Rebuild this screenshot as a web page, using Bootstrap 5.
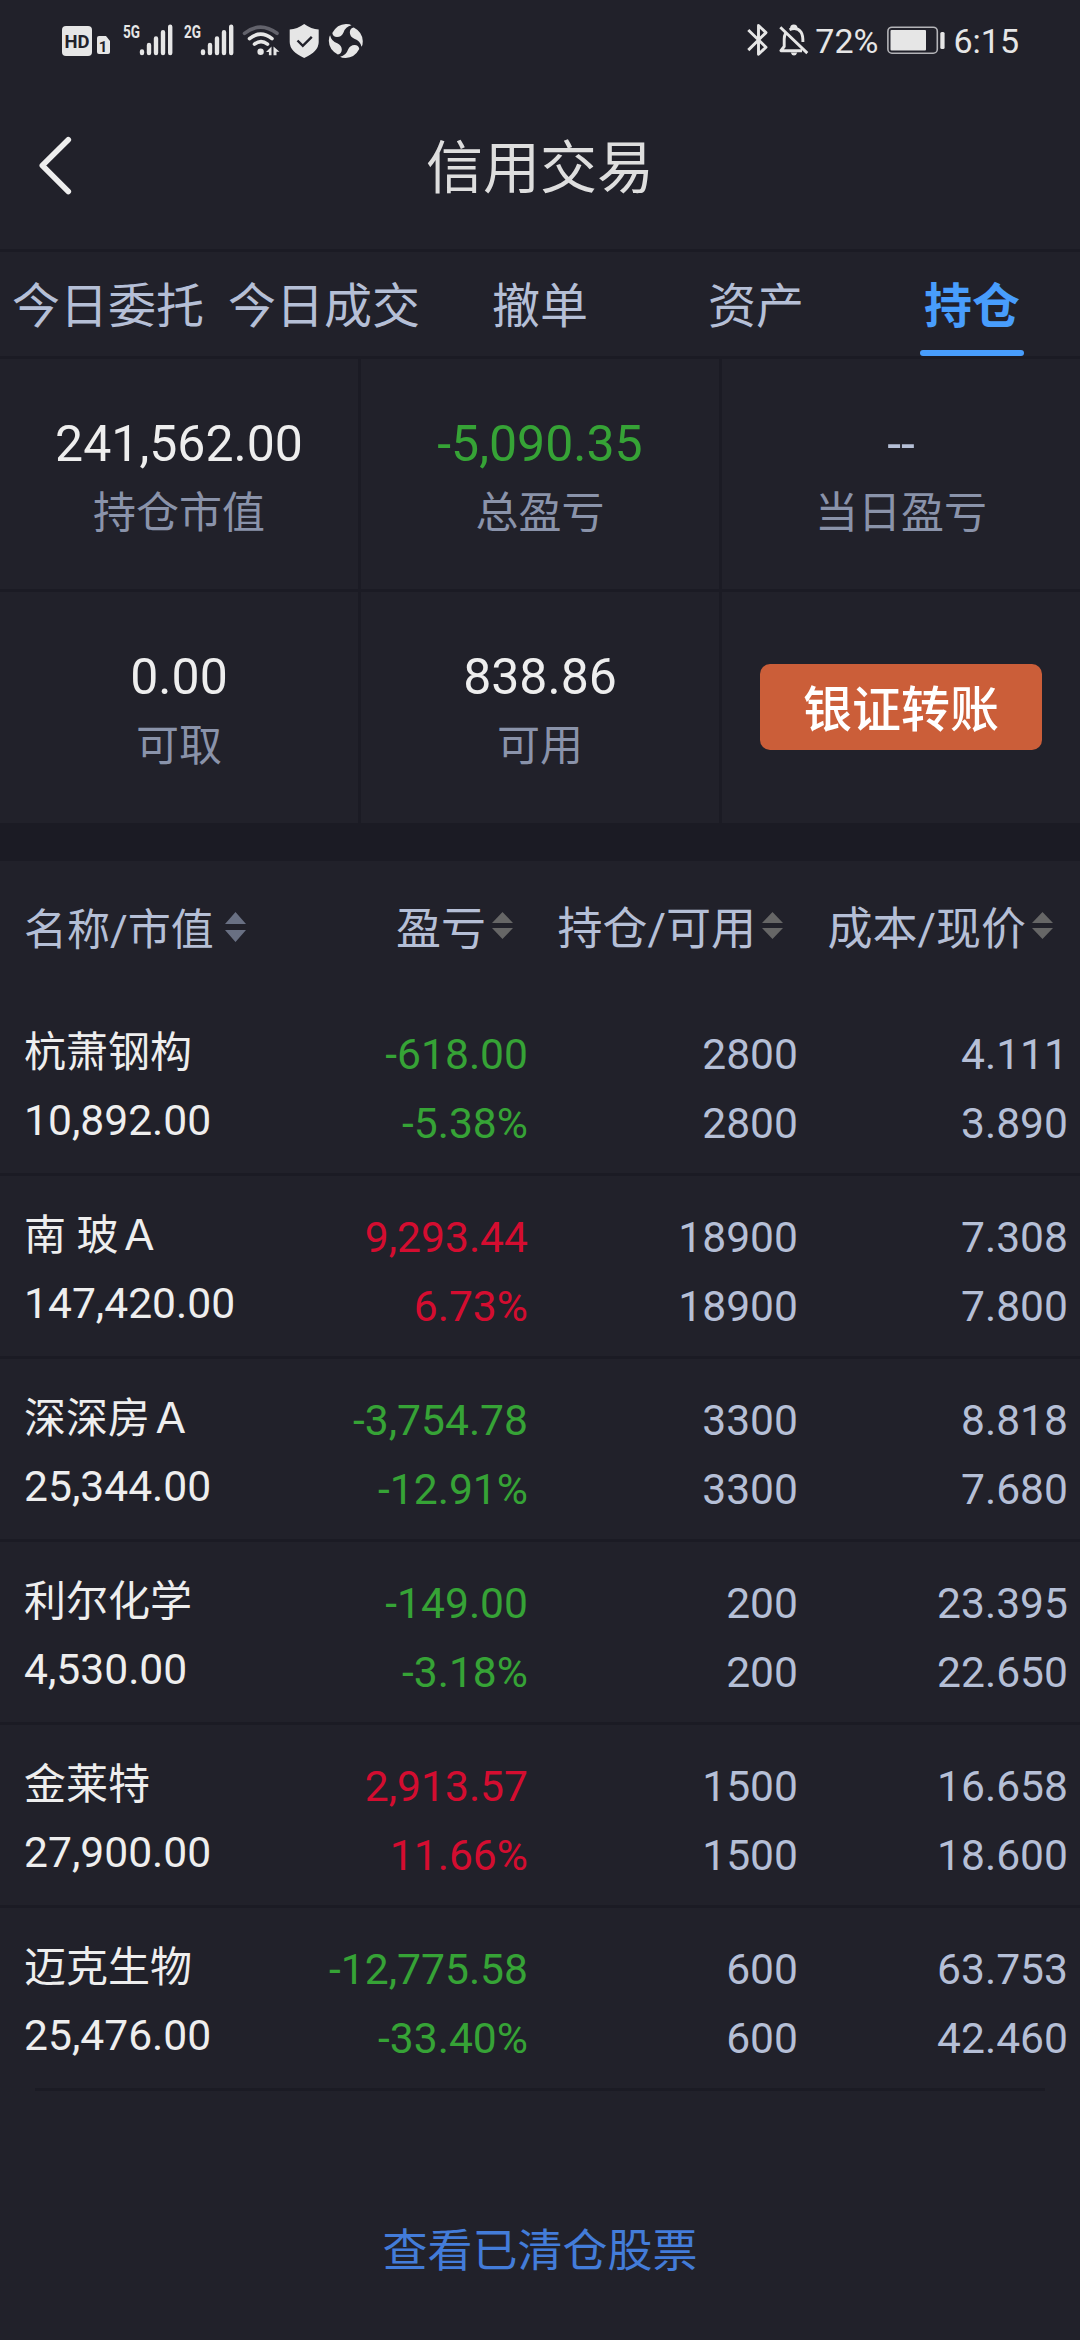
<!DOCTYPE html>
<html lang="zh-CN">
<head>
<meta charset="utf-8">
<meta name="viewport" content="width=device-width, initial-scale=1">
<title>信用交易</title>
<link href="https://cdn.jsdelivr.net/npm/bootstrap@5.3.0/dist/css/bootstrap.min.css" rel="stylesheet">
<style>
  :root { --ink: #eeeeee; --soft: #b5bfd6; --dim: #8a93aa; --line: #1b1b24; --panel: #21212a; }
  body { background: var(--panel); color: var(--soft); font-family: Roboto, "Noto Sans CJK SC", sans-serif; width: 1080px; height: 2340px; overflow: hidden; }
  svg { display: block; flex: none; }
  .statusbar { height: 82px; padding: 0 61px 0 60px; color: #e6e6e6; font-size: 34px; line-height: 82px; }
  .battery { margin-left: 7px; }
  .titlebar { height: 170px; border-bottom: 3px solid var(--line); padding-left: 36px; }
  .titlebar h1 { font-size: 57px; font-weight: 400; line-height: 64px; padding-top: 7px; margin: 0 108px 0 0; color: #dedede; }
  .tabs { height: 107px; border-bottom: 3px solid var(--line); }
  .tabs .nav-link { flex: 0 0 216px; text-align: center; color: var(--soft); font-size: 48px; line-height: 60px; padding: 25px 0 0; height: 104px; white-space: nowrap; position: relative; }
  .tabs .nav-link.active { color: #489dfc; font-weight: 700; }
  .tabs .nav-link.active::after { content: ""; position: absolute; left: 56px; bottom: 0; width: 104px; height: 6px; border-radius: 3px; background: #489dfc; }
  .summary { display: grid; grid-template-columns: 358px 358px 358px; grid-template-rows: 230px 231px; gap: 3px; background: var(--line); padding-bottom: 38px; }
  .cell { background: var(--panel); padding-top: 55px; text-align: center; }
  .amount { font-size: 50px; line-height: 60px; color: var(--ink); }
  .caption-txt { font-size: 43px; line-height: 50px; margin-top: 14px; color: var(--dim); }
  .btn-transfer { width: 282px; height: 86px; margin-top: 17px; padding: 6px 0 0; border: 0; border-radius: 10px; background: #cb5e39; color: #fff; font-size: 49px; font-weight: 500; line-height: 82px; }
  .btn-transfer:hover { background: #cb5e39; color: #fff; }
  .cols { display: grid; grid-template-columns: 258px 270px 270px 270px; padding-right: 12px; }
  .heads { height: 132px; font-size: 45px; line-height: 60px; white-space: nowrap; }
  .heads > div { display: flex; align-items: center; justify-content: flex-end; padding-right: 15px; }
  .heads > div:first-child { justify-content: flex-start; padding: 0 0 0 24px; font-size: 43px; }
  .heads span { padding-top: 6px; margin-right: 6px; }
  .heads > div:first-child span { margin-right: 11px; }
  .heads > div:not(:first-child) svg { margin-top: -3px; }
  .holding { height: 183px; border-bottom: 3px solid var(--line); padding-top: 27px; font-size: 42.6px; line-height: 69px; text-align: right; white-space: nowrap; }
  .holding:last-child { border-bottom-color: transparent; }
  .holding > div:first-child { text-align: left; padding-left: 24px; margin-top: -1px; line-height: 66.5px; color: var(--ink); }
  .stock { font-size: 42px; }
  .up { color: #d40d30; }
  .down { color: #36a336; }
  .endline { height: 3px; margin: -3px 35px 0; background: var(--line); position: relative; }
  .cleared { display: block; margin-top: 131px; font-size: 45px; line-height: 60px; color: #437cd9; text-decoration: none; text-align: center; }
</style>
</head>
<body>
<header class="statusbar d-flex align-items-center">
  <svg width="52" height="82" viewBox="60 0 52 82" fill="#e6e6e6">
    <rect x="62" y="26" width="30" height="30" rx="4"/>
    <text x="77" y="47.8" font-family="Roboto" font-size="19" font-weight="700" fill="#21212a" text-anchor="middle" textLength="25" lengthAdjust="spacingAndGlyphs">HD</text>
    <path d="M99 36h7l4 5v11a2 2 0 0 1-2 2h-9a2 2 0 0 1-2-2V38a2 2 0 0 1 2-2z"/>
    <text x="103" y="51.5" font-family="Roboto" font-size="15" font-weight="700" fill="#21212a" text-anchor="middle">1</text>
  </svg>
  <svg width="61" height="82" viewBox="112 0 61 82" fill="#e6e6e6">
    <text x="123" y="38" font-family="Roboto" font-size="18" font-weight="700" textLength="17" lengthAdjust="spacingAndGlyphs">5G</text>
    <path stroke="#e6e6e6" stroke-width="4.4" stroke-linecap="round" d="M142 51.5v1.6M149 45v8.1M156 38.5v14.6M163 32.2v20.9M170.2 26.8v26.3"/>
  </svg>
  <svg width="61" height="82" viewBox="112 0 61 82" fill="#e6e6e6">
    <text x="123" y="38" font-family="Roboto" font-size="18" font-weight="700" textLength="17" lengthAdjust="spacingAndGlyphs">2G</text>
    <path stroke="#e6e6e6" stroke-width="4.4" stroke-linecap="round" d="M142 51.5v1.6M149 45v8.1M156 38.5v14.6M163 32.2v20.9M170.2 26.8v26.3"/>
  </svg>
  <svg width="50" height="82" viewBox="234 0 50 82" fill="none" stroke="#e6e6e6" stroke-width="3.6" stroke-linecap="round">
    <path stroke="#62626b" d="M244.5 33.3q15.800-12.500 32.500 0"/>
    <path d="M249.500 38.700q11-9 22.500 0M254.500 44.200q6.500-5.200 13 0"/>
    <circle cx="260.600" cy="51.700" r="3.200" fill="#e6e6e6" stroke="none"/>
    <path fill="#e6e6e6" stroke="none" d="M266 52l5.500-5.500v8.700h-2.600v-3.200zM273.500 46.500l6 5.200h-3v3.500h-3z"/>
  </svg>
  <svg width="84" height="82" viewBox="284 0 84 82" fill="#e6e6e6">
    <path d="M304.200 24q7 5 14.500 5.500v12.500q0 9.500-14.500 16q-14.500-6.500-14.500-16V29.500q7.500-.5 14.500-5.500z"/>
    <path d="M297.500 40.500l5.300 5.300 9-9" fill="none" stroke="#21212a" stroke-width="2.400"/>
    <path id="blade" d="M332.300 33Q337 24.200 346 24Q350 24 351.500 25.300Q345.500 26.500 343.500 32.500Q341.500 37 337 37Q333 36.800 332.300 33z"/>
    <use href="#blade" transform="rotate(90 345.800 41)"/>
    <use href="#blade" transform="rotate(180 345.800 41)"/>
    <use href="#blade" transform="rotate(270 345.800 41)"/>
  </svg>
  <svg class="ms-auto" width="70" height="82" viewBox="744 0 70 82" fill="none" stroke="#e6e6e6" stroke-width="2.900" stroke-linejoin="round">
    <path d="M747.300 30l17.700 17.200-7.500 7.100V25.500l7.500 7.100-17.700 17.500"/>
    <path d="M779.300 27.300l27 25.800M784.500 33.500q-1.300 2.400-1.300 5.500v7.500l-3.300 4.200H801M788.500 29.800q7.200-3.300 11.500 2.300q2 3 1.900 10"/>
    <path d="M790.500 28.500q0-2.500 2.300-2.500t2.300 2.500"/>
    <path fill="#e6e6e6" stroke="none" d="M789.700 52.500h6.600q-.8 2.900-3.300 2.900t-3.300-2.900z"/>
  </svg>
  <span>72%</span>
  <svg class="battery" width="60" height="82" viewBox="884 0 60 82">
    <rect x="886.900" y="27.200" width="49.400" height="26" rx="4" fill="none" stroke="#b4b4b8" stroke-width="1.600"/>
    <rect x="889.500" y="30" width="35.500" height="20.500" rx="1" fill="#e6e6e6"/>
    <rect x="939.300" y="32" width="4.300" height="17" rx="1.500" fill="#e6e6e6"/>
  </svg>
  <span class="ps-2">6:15</span>
</header>

<div class="titlebar d-flex align-items-center">
  <svg width="72" height="60" viewBox="36 136 72 60" fill="none" stroke="#eee" stroke-width="5.600" stroke-linecap="round" stroke-linejoin="round"><path d="M68.300 139.700L42.300 165.500l26 26"/></svg>
  <h1 class="flex-grow-1 text-center">信用交易</h1>
</div>

<nav class="tabs nav flex-nowrap">
  <a class="nav-link" href="#">今日委托</a>
  <a class="nav-link" href="#">今日成交</a>
  <a class="nav-link" href="#">撤单</a>
  <a class="nav-link" href="#">资产</a>
  <a class="nav-link active" href="#">持仓</a>
</nav>

<section class="summary">
  <div class="cell"><div class="amount">241,562.00</div><div class="caption-txt">持仓市值</div></div>
  <div class="cell"><div class="amount down">-5,090.35</div><div class="caption-txt">总盈亏</div></div>
  <div class="cell"><div class="amount" style="color:var(--soft)">--</div><div class="caption-txt">当日盈亏</div></div>
  <div class="cell"><div class="amount">0.00</div><div class="caption-txt">可取</div></div>
  <div class="cell"><div class="amount">838.86</div><div class="caption-txt">可用</div></div>
  <div class="cell"><button class="btn btn-transfer" type="button">银证转账</button></div>
</section>

<div class="cols heads">
  <div><span>名称/市值</span><svg width="21" height="30" fill="#697083"><path d="M0 12L10.500 0 21 12zM0 18h21L10.500 30z"/></svg></div>
  <div><span>盈亏</span><svg width="21" height="27" fill="#666"><path d="M0 11L10.500 0 21 11zM0 16h21L10.500 27z"/></svg></div>
  <div><span>持仓/可用</span><svg width="21" height="27" fill="#666"><path d="M0 11L10.500 0 21 11zM0 16h21L10.500 27z"/></svg></div>
  <div><span>成本/现价</span><svg width="21" height="27" fill="#666"><path d="M0 11L10.500 0 21 11zM0 16h21L10.500 27z"/></svg></div>
</div>

<main>
  <div class="cols holding">
    <div><span class="stock">杭萧钢构</span><br>10,892.00</div><div class="down">-618.00<br>-5.38%</div><div>2800<br>2800</div><div>4.111<br>3.890</div>
  </div>
  <div class="cols holding">
    <div><span class="stock">南 玻Ａ</span><br>147,420.00</div><div class="up">9,293.44<br>6.73%</div><div>18900<br>18900</div><div>7.308<br>7.800</div>
  </div>
  <div class="cols holding">
    <div><span class="stock">深深房Ａ</span><br>25,344.00</div><div class="down">-3,754.78<br>-12.91%</div><div>3300<br>3300</div><div>8.818<br>7.680</div>
  </div>
  <div class="cols holding">
    <div><span class="stock">利尔化学</span><br>4,530.00</div><div class="down">-149.00<br>-3.18%</div><div>200<br>200</div><div>23.395<br>22.650</div>
  </div>
  <div class="cols holding">
    <div><span class="stock">金莱特</span><br>27,900.00</div><div class="up">2,913.57<br>11.66%</div><div>1500<br>1500</div><div>16.658<br>18.600</div>
  </div>
  <div class="cols holding">
    <div><span class="stock">迈克生物</span><br>25,476.00</div><div class="down">-12,775.58<br>-33.40%</div><div>600<br>600</div><div>63.753<br>42.460</div>
  </div>
</main>
<div class="endline"></div>
<a class="cleared" href="#">查看已清仓股票</a>
<script src="https://cdn.jsdelivr.net/npm/bootstrap@5.3.0/dist/js/bootstrap.bundle.min.js"></script>
</body>
</html>
